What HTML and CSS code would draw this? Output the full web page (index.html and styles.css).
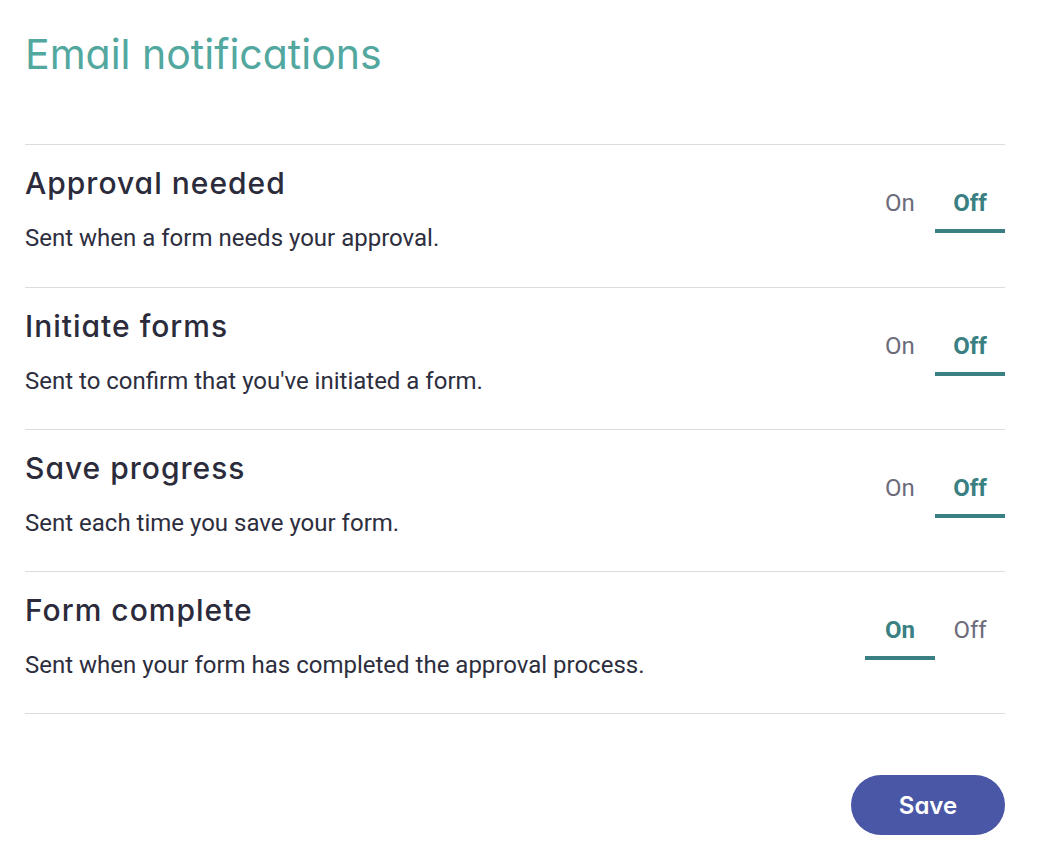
FILE: index.html
```html
<!DOCTYPE html>
<html lang="en">
<head>
<meta charset="utf-8">
<title>Email notifications</title>
<link rel="stylesheet" href="styles.css">
</head>
<body>
<main class="page">
  <h1 class="page-title">Email notifications</h1>
  <ul class="list">
    <li class="row">
      <div class="row-text">
        <h2 class="row-title">Approval needed</h2>
        <p class="row-desc">Sent when a form needs your approval.</p>
      </div>
      <div class="toggle">
        <span class="tab">On</span>
        <span class="tab active">Off</span>
      </div>
    </li>
    <li class="row">
      <div class="row-text">
        <h2 class="row-title">Initiate forms</h2>
        <p class="row-desc">Sent to confirm that you've initiated a form.</p>
      </div>
      <div class="toggle">
        <span class="tab">On</span>
        <span class="tab active">Off</span>
      </div>
    </li>
    <li class="row">
      <div class="row-text">
        <h2 class="row-title">Save progress</h2>
        <p class="row-desc">Sent each time you save your form.</p>
      </div>
      <div class="toggle">
        <span class="tab">On</span>
        <span class="tab active">Off</span>
      </div>
    </li>
    <li class="row">
      <div class="row-text">
        <h2 class="row-title">Form complete</h2>
        <p class="row-desc">Sent when your form has completed the approval process.</p>
      </div>
      <div class="toggle">
        <span class="tab active">On</span>
        <span class="tab">Off</span>
      </div>
    </li>
  </ul>
  <div class="actions">
    <button class="save-btn" type="button">Save</button>
  </div>
</main>
</body>
</html>
```
FILE: styles.css
```css
* { box-sizing: border-box; }
html, body { margin: 0; padding: 0; background: #ffffff; }
body { font-family: Roboto, "Liberation Sans", sans-serif; }

.page {
  width: 1005px;
  padding-left: 25px;
}

.page-title {
  margin: 30px 0 66px;
  font-family: Inter, "Liberation Sans", sans-serif;
  font-feature-settings: "cv11" 1;
  font-weight: 400;
  font-size: 41px;
  line-height: 48px;
  color: #52a89f;
}

.list {
  list-style: none;
  margin: 0;
  padding: 0;
  border-bottom: 1px solid #dcdcdf;
}

.row {
  display: flex;
  justify-content: space-between;
  align-items: flex-start;
  height: 142px;
  padding-top: 20px;
  border-top: 1px solid #dcdcdf;
}

.row:first-child {
  height: 143px;
}

.row-title {
  margin: 0;
  font-family: Inter, "Liberation Sans", sans-serif;
  font-feature-settings: "cv11" 1;
  font-weight: 500;
  font-size: 30px;
  line-height: 36px;
  letter-spacing: 1px;
  color: #2b2b3b;
}

.row-desc {
  margin: 23px 0 0;
  font-size: 24px;
  line-height: 28px;
  color: #2d2e3e;
}

.toggle {
  display: flex;
  margin-top: 24px;
}

.tab {
  width: 70px;
  text-align: center;
  font-size: 24px;
  line-height: 28px;
  padding-bottom: 12px;
  color: #6c6b7a;
  border-bottom: 4px solid transparent;
}

.tab.active {
  font-weight: 700;
  color: #3a7f81;
  border-bottom-color: #3a7f81;
}

.actions {
  display: flex;
  justify-content: flex-end;
  margin-top: 61px;
}

.save-btn {
  width: 154px;
  height: 60px;
  border: none;
  border-radius: 30px;
  background: #4a56a6;
  color: #ffffff;
  font-family: Inter, "Liberation Sans", sans-serif;
  font-feature-settings: "cv11" 1;
  font-weight: 600;
  font-size: 24px;
  padding: 0;
  cursor: pointer;
}
```
